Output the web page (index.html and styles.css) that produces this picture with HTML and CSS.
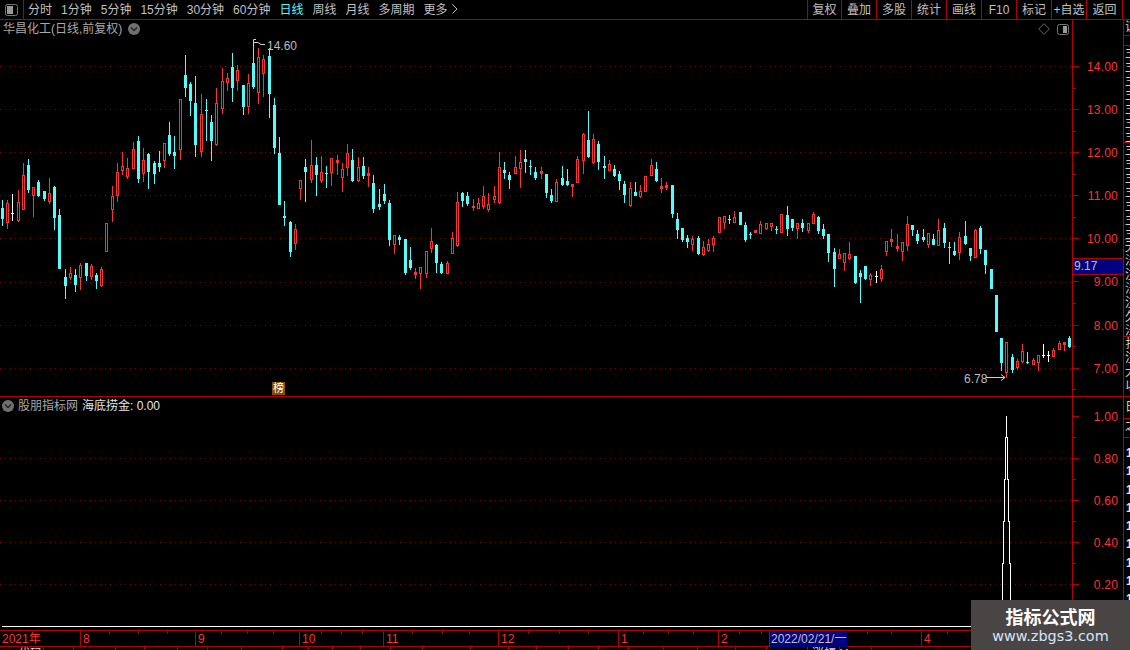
FILE: index.html
```html
<!DOCTYPE html>
<html lang="zh">
<head>
<meta charset="utf-8">
<title>华昌化工</title>
<link rel="stylesheet" href="styles.css">
</head>
<body>
<div class="app">
  <header class="toolbar">
    <div class="tb-icon">
      <svg class="layout-icon" width="13" height="12" viewBox="0 0 13 12"><rect x="0.5" y="0.5" width="12" height="11" rx="2" fill="none" stroke="#777"/><rect x="2" y="2" width="6" height="8" fill="#999"/></svg>
    </div>
    <nav class="periods">
      <span>分时</span><span>1分钟</span><span>5分钟</span><span>15分钟</span><span>30分钟</span><span>60分钟</span><span class="active">日线</span><span>周线</span><span>月线</span><span>多周期</span><span class="more">更多 <svg width="6" height="10" viewBox="0 0 6 10"><path d="M.5.5 5 5 .5 9.5" fill="none" stroke="#bbb"/></svg></span>
    </nav>
    <div class="actions">
      <span class="act narrow">复权</span><span class="act">叠加</span><span class="act">多股</span><span class="act">统计</span><span class="act">画线</span><span class="act">F10</span><span class="act">标记</span><span class="act">+自选</span><span class="act wide">返回</span>
    </div>
  </header>

  <div class="main">
    <div class="charts">
      <section class="panel price-panel">
        <div class="plot">
          <svg class="canvas" id="price-canvas" width="1072" height="376" viewBox="0 20 1072 376" shape-rendering="crispEdges">
            <path class="grid" d="M0 66.5H1072M0 109.5H1072M0 152.5H1072M0 195.5H1072M0 238.5H1072M0 282.5H1072M0 325.5H1072M0 368.5H1072"/>
            <g id="candles"></g>
            <path class="note-line" d="M253.5 46V39.5H256M254 42.5H258L261 44.5H265" shape-rendering="auto"/>
            <text class="note" x="267" y="50">14.60</text>
            <text class="note" x="964" y="383">6.78</text>
            <path class="note-line" d="M986 377.5H1005M1001 374.5 1005 377.5 1001 380.5" shape-rendering="auto"/>
          </svg>
          <div class="plot-head">
            <span class="title">华昌化工(日线,前复权)</span>
            <svg class="chev" width="12" height="12" viewBox="0 0 12 12"><circle cx="6" cy="6" r="6" fill="#707070"/><path d="M3 4.5 6 7.5 9 4.5" fill="none" stroke="#222" stroke-width="1.4"/></svg>
            <span class="head-right">
              <svg width="12" height="12" viewBox="0 0 12 12"><path d="M6 .7 11.300 6 6 11.300 .7 6Z" fill="none" stroke="#666"/></svg>
              <svg width="12" height="11" viewBox="0 0 12 11"><rect x=".5" y=".5" width="11" height="10" rx="2" fill="none" stroke="#777"/><rect x="6" y="2" width="4" height="7" fill="#999"/></svg>
            </span>
          </div>
          <span class="bang">榜</span>
        </div>
        <div class="axis price-axis">
          <div class="ax-row"><span>14.00</span></div>
          <div class="ax-row"><span>13.00</span></div>
          <div class="ax-row"><span>12.00</span></div>
          <div class="ax-row"><span>11.00</span></div>
          <div class="ax-row"><span>10.00</span></div>
          <div class="ax-row"><span>9.00</span></div>
          <div class="ax-row"><span>8.00</span></div>
          <div class="ax-row"><span>7.00</span></div>
          <div class="price-tag">9.17</div>
        </div>
      </section>

      <section class="panel ind-panel">
        <div class="plot">
          <svg class="canvas" width="1072" height="233" viewBox="0 397 1072 233" shape-rendering="crispEdges">
            <path class="grid" d="M0 458.500H1072M0 500.500H1072M0 542.500H1072M0 584.500H1072"/>
            <path class="spike" d="M1002.500 606V563.500H1003.500V521.500H1004.500V479.500H1005.500V437.500H1006.500V416M1006.500 437.500H1007.500V479.500H1008.500V521.500H1009.500V563.500H1010.500V606"/>
            <path class="baseline" d="M2 626.500H1072"/>
          </svg>
          <div class="plot-head ind-head">
            <svg class="chev" width="12" height="12" viewBox="0 0 12 12"><circle cx="6" cy="6" r="6" fill="#707070"/><path d="M3 4.500 6 7.500 9 4.500" fill="none" stroke="#222" stroke-width="1.400"/></svg>
            <span class="title">股朋指标网</span>
            <span class="ind-value">海底捞金: 0.00</span>
          </div>
        </div>
        <div class="axis ind-axis">
          <div class="ax-row"><span>1.00</span></div>
          <div class="ax-row"><span>0.80</span></div>
          <div class="ax-row"><span>0.60</span></div>
          <div class="ax-row"><span>0.40</span></div>
          <div class="ax-row"><span>0.20</span></div>
        </div>
      </section>

      <div class="date-axis">
        <span>2021年</span><span>8</span><span>9</span><span>10</span><span>11</span><span>12</span><span>1</span><span>2</span><span class="cursor-date">2022/02/21/一</span><span class="blank"></span><span>4</span>
        <svg class="date-ticks" width="1123" height="4" viewBox="0 0 1123 4" shape-rendering="crispEdges"><path d="M109.500 0V3M138.500 0V3M167.500 0V3M221.500 0V3M247.500 0V3M273.500 0V3M321.500 0V3M341.500 0V3M362.500 0V3M412.500 0V3M442.500 0V3M469.500 0V3M528.500 0V3M559.500 0V3M588.500 0V3M643.500 0V3M668.500 0V3M693.500 0V3M739.500 0V3M761.500 0V3M867.500 0V3M891.500 0V3M947.500 0V3"/></svg>
      </div>

      <div class="status">
        <span class="st-a">代码</span><span class="st-b">涨幅</span><span class="st-c">11</span>
        <svg class="status-ticks" width="1123" height="4" viewBox="0 0 1123 4" shape-rendering="crispEdges"><path d="M43.500 0V4M73.500 0V4M115.500 0V4M144.500 0V4M177.500 0V4M207.500 0V4M241.500 0V4M282.500 0V4M308.500 0V4M332.500 0V4M360.500 0V4M390.500 0V4M422.500 0V4M470.500 0V4M508.500 0V4M536.500 0V4M568.500 0V4M598.500 0V4M628.500 0V4M663.500 0V4M697.500 0V4M735.500 0V4M766.500 0V4M807.500 0V4M839.500 0V4M871.500 0V4"/></svg>
      </div>
    </div>

    <aside class="strip">
      <div class="sec s1"><p>证</p></div>
      <div class="sec s2"></div>
      <div class="sec s3"><p>主</p><p>主</p><p>主</p><p>主</p><p>主</p><p>主</p><p>主</p></div>
      <div class="sec s3"><p>主</p><p>主</p><p>主</p><p>主</p><p>主</p><p>主</p><p>主</p></div>
      <div class="sec s3"><p>无</p><p>法</p><p>注</p><p>法</p><p>注</p><p>久</p><p>法</p></div>
      <div class="sec s4"><p>扎</p><p>注</p><p>大</p><p>以</p></div>
      <div class="sec s5"><p class="yellow">日</p></div>
      <div class="sec s6"><p>之</p></div>
      <div class="rows"><p>1</p><p>1</p><p>1</p><p>1</p><p>1</p><p>1</p><p>1</p><p>1</p><p>1</p><p>1</p><p>1</p></div>
    </aside>
  </div>

  <div class="watermark">
    <strong>指标公式网</strong>
    <span>www.zbgs3.com</span>
  </div>
</div>
<script src="chart.js"></script>
</body>
</html>
```

FILE: styles.css
```css
* { box-sizing: border-box; }
html, body { margin: 0; padding: 0; background: #000; }
body { width: 1130px; height: 650px; overflow: hidden; font: 12px/14px "Liberation Sans", "Noto Sans CJK SC", sans-serif; color: #c0c0c0; }
p { margin: 0; }

.app { position: relative; width: 1130px; height: 650px; display: flex; flex-direction: column; overflow: hidden; background: #000; }

/* top toolbar */
.toolbar { flex: none; height: 20px; display: flex; border-bottom: 1px solid #b40000; padding-right: 7px; }
.tb-icon { width: 24px; border-right: 1px solid #b40000; display: flex; align-items: center; padding: 0 0 0 5px; }
.layout-icon { display: block; }
.periods { flex: 1; display: flex; gap: 9px; align-items: center; padding-left: 4px; white-space: nowrap; }
.periods .active { color: #54fcfc; }
.more svg { margin-left: 1px; }
.actions { display: flex; }
.act { width: 35px; border-left: 1px solid #b40000; display: flex; align-items: center; justify-content: center; white-space: nowrap; }
.act.narrow { width: 34px; }
.act.wide { width: 37px; border-right: 1px solid #b40000; }

/* main split */
.main { flex: 1; min-height: 0; display: flex; }
.charts { width: 1124px; flex: none; display: flex; flex-direction: column; border-right: 1px solid #b40000; }

.panel { display: flex; flex: none; }
.price-panel { height: 377px; border-bottom: 1px solid #b40000; }
.ind-panel { height: 233px; }

.plot { position: relative; width: 1072px; flex: none; }
.canvas { position: absolute; left: 0; top: 0; display: block; }
.plot-head { position: relative; display: flex; align-items: center; gap: 6px; height: 18px; padding: 0 3px; }
.title { color: #a8a8a8; white-space: nowrap; }
.chev { flex: none; display: block; }
.head-right { margin-left: auto; display: flex; align-items: center; gap: 7px; }
.head-right svg { display: block; }
.ind-head { height: 17px; padding-left: 2px; gap: 4px; }
.ind-value { margin-left: 0; color: #e6e6e6; white-space: nowrap; }
.bang { position: absolute; left: 272px; top: 362px; width: 13px; height: 13px; background: #8a4a00; color: #fff; font-size: 11px; line-height: 13px; text-align: center; }

.grid { fill: none; stroke: #8c0000; stroke-width: 1; stroke-dasharray: 1 4; }
.note { fill: #bdbdbd; font: 12px "Liberation Sans", sans-serif; }
.note-line { fill: none; stroke: #cfcfcf; stroke-width: 1; }
.spike { fill: none; stroke: #fff; stroke-width: 1; }
.baseline { fill: none; stroke: #fff; stroke-width: 1; }
.c-fill { fill: #54fcfc; }
.r-fill { fill: #ff3232; }
.w-fill { fill: #fff; }
.r-box { fill: #000; stroke: #ff3232; stroke-width: 1; }

/* value axes */
.axis { position: relative; width: 51px; flex: none; border-left: 1px solid #b40000; color: #ff3232; text-align: right; }
.price-axis { padding-top: 46px; }
.price-axis .ax-row { height: 43.1px; }
.ind-axis { padding-top: 19px; }
.ind-axis .ax-row { height: 42px; }
.ax-row { position: relative; padding-right: 5px; }
.ax-row::before, .ax-row::after { content: ""; position: absolute; left: 0; height: 1px; background: #b40000; }
.ax-row::before { top: 0; width: 6px; }
.ax-row::after { top: 50%; width: 3px; }
.ax-row span { display: block; transform: translateY(-6px); letter-spacing: .2px; }
.price-tag { position: absolute; left: 0; right: 0; top: 238px; height: 17px; padding-left: 1px; background: #000080; border-top: 1px solid #b40000; border-bottom: 1px solid #b40000; color: #c0c0c0; text-align: left; line-height: 15px; }

/* date axis */
.date-axis { position: relative; flex: none; height: 17px; margin-right: -1px; display: grid; grid-template-columns: 80px 115px 104px 84px 115px 120px 100px 51px 78px 74px 1fr; border-top: 1px solid #b40000; border-bottom: 1px solid #b40000; color: #ff3232; line-height: 16px; }
.date-axis span { padding-left: 2px; border-left: 1px solid #b40000; white-space: nowrap; }
.date-axis span:first-child { border-left: 0; }
.date-axis .cursor-date { background: #000080; color: #c0c0c0; padding-left: 1px; }
.date-axis .blank { border-left: 0; }
.date-ticks path, .status-ticks path { fill: none; stroke: #b40000; stroke-width: 1; }
.date-ticks { position: absolute; left: 0; top: 0; }

/* clipped status row under the axis */
.status { position: relative; flex: 1; min-height: 0; display: flex; overflow: hidden; color: #ddd; line-height: 12px; padding-top: 1px; }
.st-a { margin-left: 18px; }
.st-b { margin-left: 770px; }
.st-c { margin-left: 2px; color: #54fcfc; }
.status-ticks { position: absolute; left: 0; top: 0; }

/* clipped list at the right edge */
.strip { flex: 1; min-width: 0; overflow: hidden; color: #cfcfcf; }
.sec { overflow: hidden; border-bottom: 1px solid #b40000; padding-left: 1px; line-height: 14px; white-space: nowrap; }
.s1 { height: 16px; }
.s2 { height: 10px; }
.s3 { height: 97px; }
.s4 { height: 60px; }
.s5 { height: 22px; }
.s6 { height: 19px; }
.yellow { color: #e0e040; padding-top: 3px; }
.rows { padding: 6px 0 0 2px; font-weight: bold; line-height: 18.300px; color: #e6e6e6; }

/* watermark */
.watermark { position: absolute; left: 971px; top: 600px; width: 159px; height: 50px; background: #4a4545; display: flex; flex-direction: column; align-items: center; padding-top: 5px; }
.watermark strong { font: bold 18px/22px "Noto Sans CJK SC", sans-serif; color: #fff; white-space: nowrap; }
.watermark span { font: 14.400px/18px "DejaVu Sans", sans-serif; color: #d2e6fa; white-space: nowrap; }
```

FILE: chart.js
```js
// color, body top, body bottom, high, low (page pixel rows)
var data = [
['c',208,218,200,225],['r',203,222,200,228],['w',213,213,194,220],['r',202,220,190,221],['r',175,209,163,209],
['c',165,189,159,192],['r',187,195,187,216],['c',182,195,180,196],['c',191,198,191,200],['r',193,201,178,203],
['c',187,217,186,229],['c',215,268,209,268],['c',277,285,269,298],['r',273,277,267,279],['c',275,284,269,291],
['r',265,277,263,289],['c',263,275,263,280],['r',266,276,264,279],['c',275,280,273,288],['r',269,285,267,286],
['r',223,251,223,251],['r',196,209,186,221],['r',172,195,163,201],['r',166,170,152,174],['r',168,176,158,178],
['r',149,168,142,168],['c',141,178,136,182],['r',160,173,148,181],['c',154,171,153,188],['c',163,173,161,183],
['c',163,166,151,171],['r',143,160,143,167],['c',135,153,122,155],['c',152,155,136,168],['r',99,149,99,159],
['c',75,87,55,96],['c',84,100,82,115],['c',103,144,76,156],['r',114,151,94,156],['c',110,110,99,140],
['c',122,140,115,160],['r',103,144,88,145],['r',81,108,68,113],['r',78,82,73,90],['c',67,87,53,101],
['r',70,80,65,90],['c',85,106,85,114],['r',83,106,74,113],['c',63,86,40,88],['r',57,92,48,103],
['r',59,73,55,96],['c',56,93,48,117],['c',105,147,98,153],['c',153,204,137,204],['c',216,217,201,225],
['c',222,251,221,256],['r',229,243,224,249],['r',180,188,180,199],['c',167,171,159,201],['r',165,179,140,182],
['c',165,174,157,195],['r',172,180,156,182],['c',173,173,166,187],['r',158,172,158,185],['r',160,162,155,174],
['r',169,177,163,191],['r',153,167,144,175],['c',160,180,149,181],['r',167,180,157,181],['c',166,175,157,178],
['r',173,175,167,186],['c',183,208,175,212],['c',204,206,189,209],['c',194,200,184,203],['c',203,239,200,245],
['r',235,244,235,253],['c',237,239,235,244],['c',239,272,239,274],['c',260,267,247,269],['r',272,274,268,278],
['r',267,273,267,288],['r',251,273,251,277],['r',241,248,228,252],['c',245,262,244,272],['c',264,272,262,273],
['r',263,273,261,273],['r',238,253,232,253],['r',202,245,192,246],['c',193,200,192,206],['c',196,203,192,205],
['r',206,207,199,210],['r',203,208,198,208],['r',196,206,186,208],['r',204,209,193,211],['r',196,199,186,202],
['r',167,202,152,203],['c',170,172,162,178],['c',175,179,172,188],['r',167,173,156,173],['r',162,168,150,187],
['c',159,161,150,172],['c',166,166,160,174],['c',172,177,167,179],['r',171,173,167,178],['c',174,192,174,197],
['c',195,200,189,202],['r',182,201,179,201],['c',178,184,166,185],['c',181,184,169,185],['r',184,186,184,196],
['r',159,182,156,182],['r',134,160,133,173],['c',140,156,111,157],['r',139,162,134,163],['c',144,161,141,169],
['c',166,167,156,178],['r',164,170,160,170],['c',169,175,165,176],['c',174,180,171,189],['c',184,194,181,202],
['r',188,205,182,206],['c',192,195,182,195],['r',191,196,185,197],['r',176,191,176,191],['r',165,175,159,175],
['c',169,180,162,181],['r',186,188,178,192],['r',185,187,182,189],['c',185,213,185,217],['c',219,229,213,238],
['c',228,239,228,241],['c',238,241,235,247],['r',239,244,236,250],['c',238,253,236,254],['r',247,254,241,255],
['r',244,250,239,251],['r',238,244,236,251],['r',217,232,217,232],['r',216,222,216,228],['c',219,219,215,223],
['r',217,222,211,222],['c',212,224,212,224],['c',225,239,222,241],['c',234,234,232,238],['r',230,232,230,232],
['r',224,233,221,233],['r',223,228,223,229],['r',223,226,223,230],['c',229,229,226,233],['r',214,232,214,232],
['c',215,228,206,235],['c',219,227,219,230],['r',223,228,223,238],['c',223,227,219,231],['r',223,230,223,232],
['r',214,223,212,223],['c',217,230,216,233],['c',229,235,224,238],['c',234,252,234,261],['c',252,268,248,286],
['r',254,258,249,258],['r',253,262,253,270],['r',254,258,242,259],['c',256,282,256,283],['c',273,276,270,302],
['c',266,278,266,279],['r',275,279,273,285],['w',276,276,271,282],['r',269,278,265,281],['r',241,251,241,255],
['r',239,241,229,246],['r',246,248,234,251],['r',242,251,242,260],['r',224,245,216,250],['c',225,229,225,235],
['c',234,240,230,243],['c',237,239,229,241],['r',233,244,233,247],['c',239,244,234,244],['r',230,245,219,245],
['c',228,242,223,247],['c',247,247,242,263],['c',251,254,242,255],['r',237,252,232,259],['c',236,243,221,244],
['c',248,255,248,260],['r',230,257,229,257],['c',228,248,226,253],['c',250,264,250,273],['c',269,288,269,288],
['c',295,331,295,331],['c',338,362,338,370],['r',342,372,342,377],['c',357,369,354,372],['r',361,367,359,369],
['r',351,361,344,362],['c',362,362,352,363],['r',360,364,358,364],['r',355,362,355,370],['w',355,355,344,357],
['w',355,355,351,361],['r',350,356,348,356],['r',343,349,341,349],['r',342,344,342,350],['c',338,346,336,347]
];

var markup = '';
data.forEach(function (d, i) {
  var x = Math.floor(2.33 + 5.232 * i);
  var cls = d[0] + '-fill';
  var top = d[1], bot = d[2], hi = d[3], lo = d[4];
  if (d[0] === 'r' && bot - top > 2) {
    if (hi < top) markup += '<rect class="' + cls + '" x="' + x + '" y="' + hi + '" width="1" height="' + (top - hi) + '"/>';
    if (lo > bot) markup += '<rect class="' + cls + '" x="' + x + '" y="' + bot + '" width="1" height="' + (lo - bot + 1) + '"/>';
    markup += '<rect class="r-box" x="' + (x - 0.5) + '" y="' + (top + 0.5) + '" width="2" height="' + (bot - top) + '"/>';
  } else {
    markup += '<rect class="' + cls + '" x="' + x + '" y="' + hi + '" width="1" height="' + (lo - hi + 1) + '"/>';
    markup += '<rect class="' + cls + '" x="' + (x - 1) + '" y="' + top + '" width="3" height="' + (bot - top + 1) + '"/>';
  }
});
document.getElementById('candles').innerHTML = markup;
```
